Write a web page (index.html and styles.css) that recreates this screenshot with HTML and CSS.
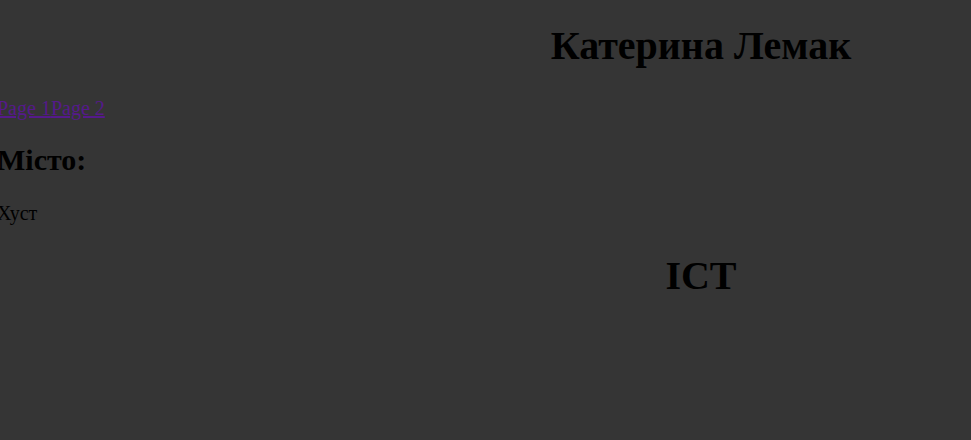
FILE: index.html
```html
<!DOCTYPE html>
<html lang="uk">
<head>
<meta charset="utf-8">
<title>Катерина Лемак</title>
<link rel="stylesheet" href="styles.css">
</head>
<body>
<main class="page">
<h1 class="title">Катерина Лемак</h1>
<nav class="nav"><a class="link" href="#page1">Page 1</a><a class="link" href="#page2">Page 2</a></nav>
<h2 class="subtitle">Місто:</h2>
<p class="text">Хуст</p>
<h1 class="title">ІСТ</h1>
</main>
</body>
</html>
```
FILE: styles.css
```css
html {
  background: #353535;
}

body {
  margin: 0;
  font-family: "Liberation Serif", "Times New Roman", serif;
  font-size: 20px;
  line-height: 24px;
  color: #000;
}

.page {
  margin-left: -3px;
}

.title {
  margin: 0;
  padding: 23px 0 27px calc(45vw - 3px);
  font-size: 40px;
  line-height: 46px;
  text-align: center;
}

.link {
  color: #551a8b;
  text-decoration-thickness: 2px;
}

.subtitle {
  margin: 23px 0 24px;
  font-size: 30px;
  line-height: 34px;
}

.text {
  margin: 0 0 5px;
}
```
